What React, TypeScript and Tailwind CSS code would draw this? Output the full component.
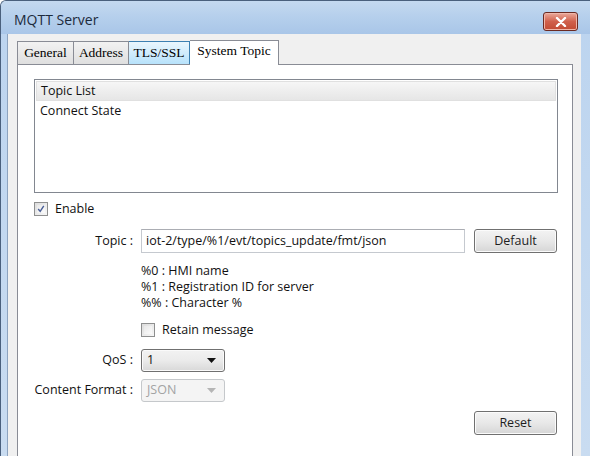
import React from 'react'

const ui = { fontFamily: '"Open Sans", "Noto Sans", sans-serif' }
const serif = { fontFamily: '"Liberation Serif", "DejaVu Serif", serif' }

function Check({ checked }: { checked?: boolean }) {
  return (
    <div className="w-[14px] h-[14px] border border-[#8e8f8f] bg-gradient-to-br from-[#dcdcdc] to-[#f7f7f7] p-[2px] flex items-center justify-center">
      <div className="w-full h-full bg-gradient-to-br from-[#e8e8e8] to-[#fbfbfb] flex items-center justify-center">
        {checked && (
          <svg width="10" height="10" viewBox="0 0 10 10">
            <path d="M1.5 5 L4 8 L8.5 1" fill="none" stroke="#4a5f97" strokeWidth="1.8" />
          </svg>
        )}
      </div>
    </div>
  )
}

function Btn({ label }: { label: string }) {
  return (
    <button className="w-[83px] h-[24px] rounded-[3px] border border-[#707070] bg-gradient-to-b from-[#f3f3f3] via-[#e8e8e8] to-[#d6d6d6] text-[12.5px] text-[#1e1e1e] shadow-[inset_0_0_0_1px_#fbfbfb]">
      {label}
    </button>
  )
}

function Combo({ value, disabled }: { value: string; disabled?: boolean }) {
  return (
    <div
      className={
        disabled
          ? 'w-[84px] h-[23px] rounded-[3px] border border-[#c5c8cb] bg-[#f4f4f4] flex items-center pl-[5px] pr-[8px] text-[#a3a3a3]'
          : 'w-[84px] h-[23px] rounded-[3px] border border-[#707070] bg-gradient-to-b from-[#f2f2f2] via-[#ebebeb] to-[#d8d8d8] shadow-[inset_0_0_0_1px_#fafafa] flex items-center pl-[5px] pr-[8px] text-[#111]'
      }
    >
      <span className="flex-1">{value}</span>
      <svg width="9" height="5" viewBox="0 0 9 5">
        <path d="M0 0 H9 L4.5 5 Z" fill={disabled ? '#b5b5b5' : '#111'} />
      </svg>
    </div>
  )
}

export default function App() {
  return (
    <div className="w-[590px] h-[456px] overflow-hidden relative bg-gradient-to-b from-[#bcd4ef] to-[#c9dcf1] border-l border-t border-[#4a607d] rounded-tl-[6px] text-[12.5px]" style={ui}>
      {/* Title bar */}
      <div className="h-[33px] flex items-center justify-between pl-[13px] pr-[12px] bg-gradient-to-b from-[#c4d9f0] via-[#b5cfec] to-[#a9c6e8]">
        <span className="text-[14px] text-[#1c2a3c] mt-[3px]">MQTT Server</span>
        <div className="w-[35px] h-[19px] mt-[8px] rounded-[3px] border border-[#6b2a22] bg-gradient-to-b from-[#e9a99b] via-[#d0604c] to-[#c24a33] flex items-center justify-center shadow-[inset_0_0_0_1px_#efb6a9]">
          <svg width="12" height="10" viewBox="0 0 12 10">
            <path d="M2 1 L10 9 M10 1 L2 9" stroke="#fff" strokeWidth="2.4" strokeLinecap="round" />
          </svg>
        </div>
      </div>

      {/* Client area */}
      <div className="ml-[6px] mr-[9px] h-full border-l border-[#8da3bf] bg-[#f0f0f0] pl-[9px] pr-[8px] pt-[6px]">
        {/* Tabs */}
        <div className="flex items-end h-[24px]">
          <div className="w-[57px] h-[23px] flex items-center justify-center border border-b-0 border-[#898c95] bg-gradient-to-b from-[#f2f2f2] to-[#dfdfdf] text-[13.5px]" style={serif}>General</div>
          <div className="w-[55px] h-[23px] flex items-center justify-center border border-l-0 border-b-0 border-[#898c95] bg-gradient-to-b from-[#f2f2f2] to-[#dfdfdf] text-[13.5px]" style={serif}>Address</div>
          <div className="w-[61px] h-[23px] flex items-center justify-center border border-l-0 border-b-0 border-[#3c7fb1] bg-gradient-to-b from-[#eaf6fd] to-[#b7e2fb] text-[13.5px]" style={serif}>TLS/SSL</div>
          <div className="w-[89px] h-[25px] -mb-px relative z-10 pb-[3px] flex items-center justify-center border border-l-0 border-b-0 border-[#898c95] bg-white text-[13.5px]" style={serif}>System Topic</div>
        </div>

        {/* Panel */}
        <div className="h-full bg-white border border-[#898c95] pl-[16px] pr-[14px] pt-[14px]">
          <div className="h-[114px] border border-[#828790] pt-[1px]">
            <div className="h-[20px] mx-[1px] flex items-center pl-[4px] bg-gradient-to-b from-[#f6f6f6] to-[#e6e6e6] border border-[#e0e0e0] text-[#111]">Topic List</div>
            <div className="h-[20px] flex items-center pl-[5px] text-[#111]">Connect State</div>
          </div>

          <div className="mt-[9px] flex items-center gap-[7px] h-[14px]">
            <Check checked />
            <span className="text-[#111]">Enable</span>
          </div>

          <div className="mt-[13px] grid grid-cols-[99px_1fr] gap-x-[8px] text-[#111]">
            <div className="h-[24px] flex items-center justify-end">Topic :</div>
            <div className="flex items-center gap-[9px]">
              <div className="w-[324px] h-[24px] border border-[#c5c9cf] border-t-[#abadb3] flex items-center pl-[4px]">iot-2/type/%1/evt/topics_update/fmt/json</div>
              <Btn label="Default" />
            </div>

            <div />
            <div className="mt-[10px] leading-[16px]">
              <div>%0 : HMI name</div>
              <div>%1 : Registration ID for server</div>
              <div>%% : Character %</div>
              <div className="mt-[12px] flex items-center gap-[7px] h-[14px]">
                <Check />
                <span>Retain message</span>
              </div>
            </div>

            <div className="mt-[12px] h-[23px] flex items-center justify-end">QoS :</div>
            <div className="mt-[12px]"><Combo value="1" /></div>

            <div className="mt-[7px] h-[23px] flex items-center justify-end">Content Format :</div>
            <div className="mt-[7px]"><Combo value="JSON" disabled /></div>
          </div>

          <div className="mt-[9px] flex justify-end pr-[1px]">
            <Btn label="Reset" />
          </div>
        </div>
      </div>
    </div>
  )
}
